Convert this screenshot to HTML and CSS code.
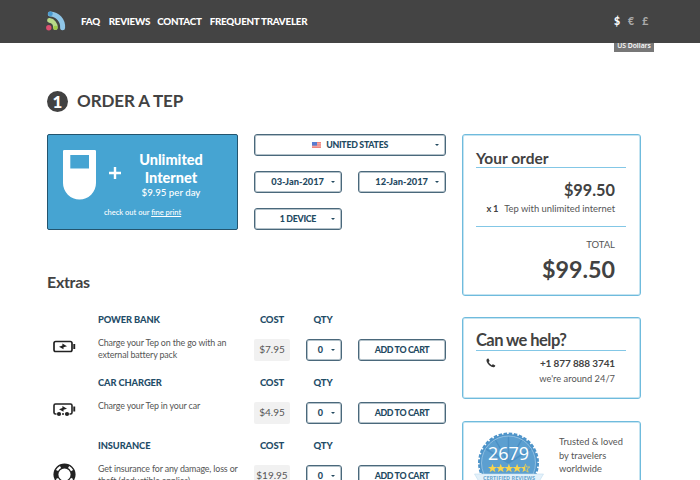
FILE: index.html
```html
<!DOCTYPE html>
<html lang="en">
<head>
<meta charset="utf-8">
<title>Order a Tep</title>
<link rel="stylesheet" href="styles.css">
</head>
<body>
<header class="topbar">
  <svg class="logo" viewBox="0 0 20 20">
    <g fill="none" stroke-linecap="round">
      <path d="M4.3 2.9A13 13 0 0 1 16.6 16.8" stroke="#8fc6e8" stroke-width="5"/>
      <path d="M3.4 9.4A7 7 0 0 1 9.4 16.8" stroke="#b9d98a" stroke-width="4.6"/>
    </g>
    <circle cx="4.400" cy="2.800" r="2.400" fill="#4a9bd0"/>
    <circle cx="9.5" cy="16.8" r="2.1" fill="#9fca45"/>
    <circle cx="2.8" cy="16.8" r="2.7" fill="#dc4f70"/>
  </svg>
  <nav class="nav">
    <a>FAQ</a><a>REVIEWS</a><a>CONTACT</a><a>FREQUENT TRAVELER</a>
  </nav>
  <div class="currency"><b>$</b><span>€</span><span>£</span><em class="tip">US Dollars</em></div>
</header>
<main class="page">
  <h1 class="step"><span class="num">1</span><span class="step-text">ORDER A TEP</span></h1>
  <div class="columns">
    <div class="order">
      <section class="config">
        <div class="promo">
          <div class="promo-top">
            <svg class="device" viewBox="0 0 33 50"><path fill="#fff" fill-rule="evenodd" d="M0 1.2Q0 0 1.2 0H31.8Q33 0 33 1.2V33a16.5 16.5 0 0 1-33 0ZM7.3 5V18.5H26V5Z"/></svg>
            <svg class="plus" viewBox="0 0 12 12"><path stroke="#fff" stroke-width="2.4" d="M6 0V12M0 6H12"/></svg>
            <div class="promo-text"><strong>Unlimited<br>Internet</strong><span>$9.95 per day</span></div>
          </div>
          <p class="fine">check out our <a>fine print</a></p>
        </div>
        <div class="selects">
          <div class="select wide"><svg class="flag" viewBox="0 0 9 6"><path fill="#f4b8b4" d="M0 0H9V6H0Z"/><path stroke="#ee7770" stroke-width=".8" d="M0 .5H9M0 2.2H9M0 3.9H9M0 5.5H9"/><path fill="#587cd0" d="M0 0H5V3.6H0Z"/></svg><span class="t-country">UNITED STATES</span><i class="caret"></i></div>
          <div class="select"><span class="t-date">03-Jan-2017</span><i class="caret"></i></div>
          <div class="select"><span class="t-date">12-Jan-2017</span><i class="caret"></i></div>
          <div class="select"><span class="t-device">1 DEVICE</span><i class="caret"></i></div>
        </div>
      </section>
      <h2 class="extras-title">Extras</h2>
      <section class="extra">
        <h3 class="name">POWER BANK</h3><h3 class="cost-h">COST</h3><h3 class="qty-h">QTY</h3>
        <svg class="icon" viewBox="0 0 23 20"><rect x="1" y="4.500" width="18" height="10" rx="1.7" fill="none" stroke="#222" stroke-width="1.7"/><path fill="#222" d="M20.300 7H22.200V12H20.300ZM6 9.700 9.400 8.500V6.500L14 9.300 10.500 10.300V12.300Z"/></svg>
        <p class="desc">Charge your Tep on the go with an<br>external battery pack</p>
        <span class="price">$7.95</span><div class="select qty"><span>0</span><i class="caret"></i></div><button class="add">ADD TO CART</button>
      </section>
      <section class="extra">
        <h3 class="name">CAR CHARGER</h3><h3 class="cost-h">COST</h3><h3 class="qty-h">QTY</h3>
        <svg class="icon" viewBox="0 0 23 20"><path fill="none" stroke="#222" stroke-width="1.6" d="M3.5 14H2.5Q1 14 1 12.500V5.500Q1 4 2.500 4H17.500Q19 4 19 5.500V12.500Q19 14 17.500 14H16.500M9 14H11"/><path fill="#222" d="M20.300 6.500H22.200V11.500H20.300ZM6 9.200 9.400 8V6L14 8.800 10.500 9.800V11.800Z"/><circle cx="6" cy="14" r="2.100" fill="#222"/><circle cx="14" cy="14" r="2.100" fill="#222"/></svg>
        <p class="desc">Charge your Tep in your car</p>
        <span class="price">$4.95</span><div class="select qty"><span>0</span><i class="caret"></i></div><button class="add">ADD TO CART</button>
      </section>
      <section class="extra">
        <h3 class="name">INSURANCE</h3><h3 class="cost-h">COST</h3><h3 class="qty-h">QTY</h3>
        <svg class="icon ring" viewBox="0 0 23 23"><circle cx="11.500" cy="11.500" r="8.600" fill="none" stroke="#222" stroke-width="5"/><circle cx="11.500" cy="11.500" r="8.500" fill="none" stroke="#fff" stroke-width="2.400" stroke-dasharray="5 8.352" stroke-dashoffset="-4"/></svg>
        <p class="desc">Get insurance for any damage, loss or<br>theft (deductible applies)</p>
        <span class="price">$19.95</span><div class="select qty"><span>0</span><i class="caret"></i></div><button class="add">ADD TO CART</button>
      </section>
    </div>
    <aside class="side">
      <section class="card summary">
        <h2 class="card-title">Your order</h2>
        <div class="amount">$99.50</div>
        <div class="item"><b>x 1</b><span>Tep with unlimited internet</span></div>
        <div class="total-label">TOTAL</div>
        <div class="total">$99.50</div>
      </section>
      <section class="card help">
        <h2 class="card-title">Can we help?</h2>
        <div class="phone"><svg viewBox="0 0 10 10"><path fill="#333" d="M.5 1.800Q1.300.400 2.400.600L3.500 2.800Q3.400 3.500 2.600 4 3.500 6 5.800 7.200 6.400 6.400 7 6.300L9.300 7.500Q9.400 8.700 8 9.300 6 9.700 3.200 7.200.100 4.200.500 1.800Z"/></svg><b>+1 877 888 3741</b></div>
        <div class="hours">we're around 24/7</div>
      </section>
      <section class="card trust">
        <svg class="badge" viewBox="0 0 70 60">
          <circle cx="34.500" cy="31" r="29" fill="#4e94c9" stroke="#4e94c9" stroke-width="3" stroke-dasharray="3.500 1.560"/>
          <circle cx="34.500" cy="31" r="27" fill="#5c9fd0" stroke="#a9cfea" stroke-width=".7"/>
          <path stroke="#4b90c5" stroke-width="1.500" d="M34.500 31V5M34.500 31 47.500 8M34.500 31 21.500 8M34.500 31 12 17M34.500 31 57 17"/>
          <text class="badge-num" x="34.500" y="27.500">2679</text>
          <path id="s" fill="#f8d44c" d="M18.500 31.800 19.700 35H23L20.400 37 21.400 40.200 18.500 38.300 15.600 40.200 16.600 37 14 35H17.300Z"/>
          <use href="#s" x="8.200"/><use href="#s" x="16.400"/><use href="#s" x="24.600"/>
          <path fill="none" stroke="#f8d44c" stroke-width=".7" d="M51.300 31.800 52.500 35H55.800L53.200 37 54.200 40.200 51.300 38.300"/>
          <path fill="#f8d44c" d="M51.300 31.800V38.300L48.400 40.200 49.400 37 46.800 35H50.100Z"/>
          <path fill="#e3f1fa" stroke="#c3def0" stroke-width=".6" d="M.500 42H69.500L66 48 69 60H1L4 48Z"/>
          <text class="badge-label" x="35" y="48">CERTIFIED REVIEWS</text>
        </svg>
        <p class="trust-text">Trusted &amp; loved<br>by travelers<br>worldwide</p>
      </section>
    </aside>
  </div>
</main>
</body>
</html>
```
FILE: styles.css
```css
* { box-sizing: border-box; }
html, body { margin: 0; height: 480px; overflow: hidden; }
html { background: #fff; }
body { font-family: Lato, "Liberation Sans", sans-serif; color: #424242; }
h1, h2, h3, p { margin: 0; font-weight: 700; }
p { font-weight: 400; }
svg { display: block; flex: none; }
span, b, a, .desc, .trust-text { white-space: nowrap; }

.topbar { height: 43px; background: #444; padding: 0 0 1px 46px; display: flex; align-items: center; color: #fff; font-size: 9.800px; font-weight: 900; }
.logo { width: 20px; height: 20px; margin-right: 15px; }
.nav { display: grid; grid-template-columns: 27.700px 48.500px 52.500px 110px; letter-spacing: -.24px; }
.currency { position: relative; display: flex; margin-left: auto; width: 86px; gap: 8px; font-size: 10.500px; color: #aaa; }
.currency b { color: #fff; }
.tip { position: absolute; z-index: -1; left: 0; top: 20px; width: 40px; height: 17px; background: #777; color: #fff; font: 600 6.800px/21px "Open Sans", sans-serif; text-align: center; white-space: nowrap; }

.page { padding-left: 47px; width: 640px; }
.step { display: flex; align-items: center; height: 22px; margin-top: 47px; font-size: 17px; gap: 9px; }
.num { width: 21px; height: 21px; border-radius: 50%; background: #424242; color: #fff; text-align: center; line-height: 21px; font-size: 17px; font-weight: 900; }
.step-text { letter-spacing: -.1px; line-height: 20px; }
.columns { display: grid; grid-template-columns: 399px 179px; gap: 16px; margin-top: 22px; }

.config { display: grid; grid-template-columns: 191px 192px; gap: 16px; height: 96px; }
.promo { border: 1px solid #23546e; border-radius: 2px; background: #46a4d2; color: #fff; height: 96px; padding: 15px 16px 0 15px; }
.promo-top { display: flex; height: 56px; }
.device { width: 33px; height: 50px; }
.plus { width: 12px; height: 12px; margin: 17px 0 0 13px; }
.promo-text { width: 100px; padding-top: 1px; text-align: center; }
.promo-text strong { display: block; font-size: 14.500px; line-height: 17.500px; font-weight: 900; }
.promo-text span { display: block; font-size: 9.700px; line-height: 13px; font-weight: 500; }
.fine { font-size: 7.500px; line-height: 10px; margin-left: 41px; padding-top: 2px; font-weight: 500; }
.fine a { text-decoration: underline; }

.selects { display: grid; grid-template-columns: 88px 88px; column-gap: 16px; row-gap: 15px; align-content: start; }
.select, .add { border: 1px solid #4a687b; box-shadow: inset 0 0 0 1px #b4c2ca; border-radius: 3px; height: 22px; color: #1f4a62; }
.select { display: flex; align-items: center; justify-content: flex-end; padding: 0 6px 1px 0; font-size: 9px; font-weight: 900; }
.wide { grid-column: span 2; }
.caret { border: 2px solid transparent; border-top: 2.500px solid #234a60; border-bottom: 0; }
.flag { width: 9px; height: 6px; margin-right: 5px; }
.t-country { margin-right: 47px; font-size: 8.800px; letter-spacing: -.28px; }
.t-date { margin-right: 7px; font-size: 9.300px; }
.t-device { margin-right: 15px; font-size: 8.800px; letter-spacing: -.3px; }

.extras-title { font-size: 16px; line-height: 20px; margin-top: 42px; margin-bottom: 20px; letter-spacing: -.3px; }
.extra { display: grid; grid-template-columns: 51px 156px 36px 16px 36px 16px 88px; grid-template-rows: 16px 11px 36.200px; color: #1f4d68; }
.extra h3 { font-size: 9.500px; line-height: 16px; grid-row: 1; white-space: nowrap; letter-spacing: -.15px; font-weight: 900; }
.extra .name { grid-column: 2; font-size: 9.300px; letter-spacing: -.1px; }
.extra .cost-h { grid-column: 3; text-align: center; }
.extra .qty-h { grid-column: 5; text-align: center; padding-right: 2px; }
.icon { grid-column: 1; grid-row: 3; width: 23px; height: 20px; margin: -2px 0 0 6px; }
.ring { height: 23px; }
.desc { grid-column: 2; grid-row: 3; color: #555; font-size: 8.900px; line-height: 12px; margin-top: -2px; letter-spacing: -.15px; }
.price { grid-column: 3; grid-row: 3; height: 22px; line-height: 21px; background: #f1f1f1; border-radius: 2px; text-align: center; color: #555; font-size: 10px; }
.qty { grid-column: 5; grid-row: 3; }
.qty span { margin-right: 8px; }
.add { grid-column: 7; grid-row: 3; padding: 0 0 1px; background: #fff; font: 900 8.800px Lato, sans-serif; letter-spacing: -.36px; }

.card { border: 1px solid #6fbbdd; box-shadow: inset 0 0 0 1px #c5e4f1; border-radius: 3px; margin-bottom: 22px; padding: 0 14px 0 13px; }
.card-title { font-size: 15.500px; line-height: 18px; border-bottom: 1px solid #83c7e6; white-space: nowrap; }
.summary { height: 162px; padding-top: 14px; text-align: right; }
.summary .card-title { text-align: left; }
.amount { font-size: 16.300px; line-height: 20px; font-weight: 700; margin: 12px 11px 0 0; }
.item { display: flex; justify-content: flex-end; gap: 6px; font-size: 9.400px; line-height: 14px; padding: 2px 11px 10px 0; border-bottom: 1px solid #83c7e6; }
.item b { letter-spacing: -.3px; }
.item span { color: #555; }
.total-label { font-size: 9.500px; line-height: 14px; margin: 11px 11px 0 0; color: #555; }
.total { font-size: 23.300px; line-height: 28px; font-weight: 700; margin: 3px 11px 0 0; }
.card + .card { margin-top: -1px; }
.help { height: 82px; padding-top: 13px; }
.help .card-title { font-size: 16.500px; line-height: 19px; letter-spacing: -.55px; }
.phone { display: flex; justify-content: space-between; align-items: center; height: 14px; margin: 5px 11px 0 10px; font-size: 10px; letter-spacing: -.12px; }
.phone svg { width: 10px; height: 10px; }
.hours { text-align: right; margin-right: 11px; font-size: 9.300px; line-height: 17px; color: #555; }
.card.trust { height: 100px; display: flex; padding: 10px 0 0 11px; margin: 0; }
.badge { width: 70px; height: 60px; }
.badge-num { fill: #fff; font: 18px "Open Sans", sans-serif; text-anchor: middle; }
.badge-label { fill: #6ba6cf; font: 700 5.500px "Open Sans", sans-serif; text-anchor: middle; }
.trust-text { font-size: 9.300px; line-height: 13.500px; margin: 3px 0 0 15px; color: #555; }
```
